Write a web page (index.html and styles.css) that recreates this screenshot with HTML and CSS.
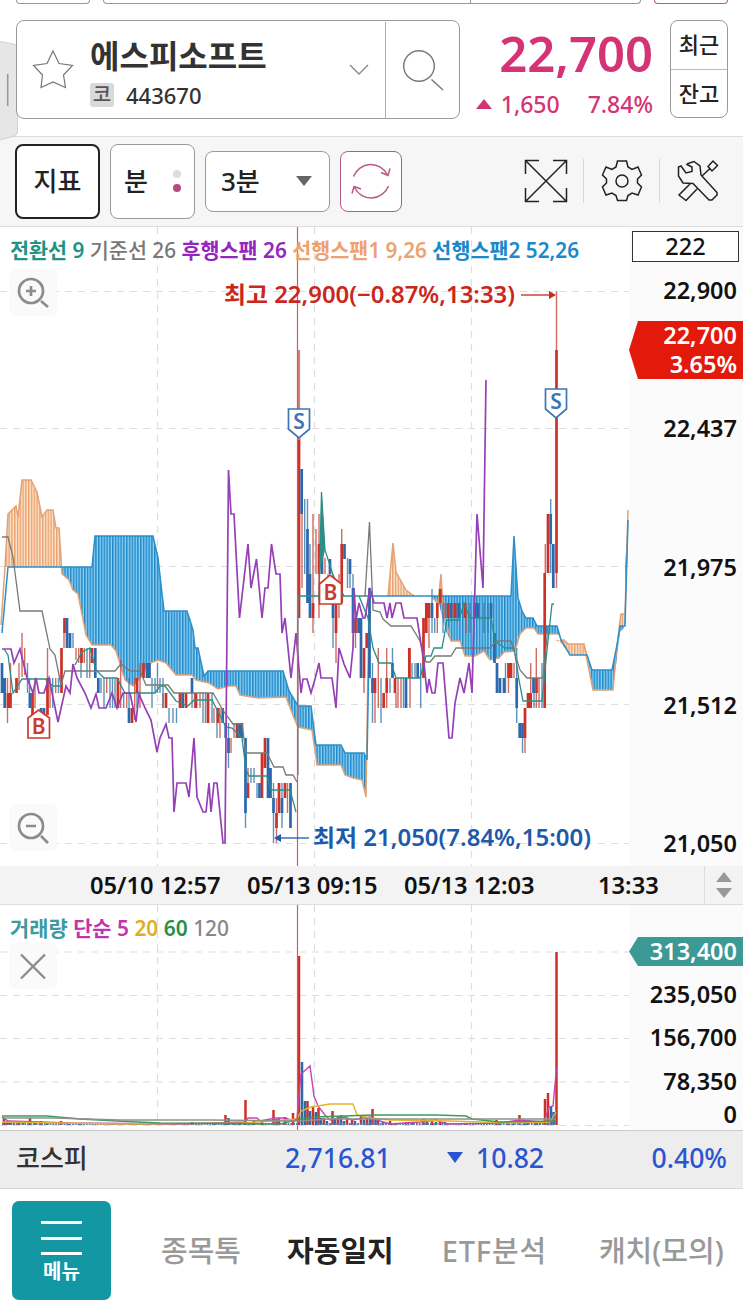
FILE: index.html
```html
<!DOCTYPE html>
<html lang="ko">
<head>
  <meta charset="UTF-8" />
  <meta name="viewport" content="width=device-width, initial-scale=1.0"/>
  <title>에스피소프트 차트</title>
  <link rel="stylesheet" href="styles.css">
</head>
<body>

  <!-- Previous row, scrolled away -->
  <div class="top-row">
    <span class="stub"></span>
    <span class="stub wide"><i></i></span>
    <span class="stub pink"></span>
  </div>

  <!-- Stock header -->
  <header class="stock">
    <svg class="handle" width="18" height="102" viewBox="0 0 18 102">
      <path d="M0 1.5L14 4Q17.5 5 17.5 9V91Q17.5 95 14 96L0 100" fill="#e6e6e6" stroke="#d0d0d0"/>
      <path d="M7.7 34V66" stroke="#999" stroke-width="1.6"/>
    </svg>
    <div class="stock-box">
      <svg class="star" width="42" height="42" viewBox="0 0 42 42">
        <path d="M21 2L27 14.5L40.5 16.5L31.5 26L33.5 38.5L21 33L9 38.5L10.5 26L1.5 16.5L15 14.5Z"/>
      </svg>
      <div class="stock-name">
        <h1>에스피소프트</h1>
        <div class="code"><span class="market">코</span><span>443670</span></div>
      </div>
      <svg class="chevron" width="20" height="12" viewBox="0 0 20 12"><path d="M1 1L10 10L19 1"/></svg>
      <div class="search">
        <svg width="42" height="42" viewBox="0 0 42 42"><circle cx="17" cy="17" r="15.3"/><path d="M29.5 30.5L41 41"/></svg>
      </div>
    </div>
    <div class="price">
      <strong>22,700</strong>
      <div class="change"><i class="up"></i><span>1,650</span><span class="rate">7.84%</span></div>
    </div>
    <div class="quick"><span>최근</span><span>잔고</span></div>
  </header>

  <!-- Chart toolbar -->
  <div class="toolbar">
    <div class="btn active">지표</div>
    <div class="btn minute">분<span class="dots"><i></i><i class="on"></i></span></div>
    <div class="btn select">3분<i class="caret"></i></div>
    <div class="btn refresh">
      <svg width="42" height="42" viewBox="0 0 42 42">
        <path d="M3.5 16.5A18.5 18.5 0 0 1 37.5 15M31 12.5L38 15.5L40 8.5M38.5 26A18.5 18.5 0 0 1 4.500 27.500M2 33.500L4 26.500L11 29"/>
      </svg>
    </div>
    <div class="tools">
      <svg width="44" height="44" viewBox="0 0 44 44">
        <path d="M1.500 15V1.500H15M29 1.500H42.500V15M42.500 29V42.500H29M15 42.500H1.500V29M1.500 1.500L42.500 42.500M42.500 1.500L1.500 42.500"/>
      </svg>
      <svg width="44" height="44" viewBox="0 0 44 44">
        <path d="M17.500 2H26.500L28 8L32 10.500L38 8L41.500 16L37.500 20V24L41.500 28L38 36L32 34L28 36.500L26.500 41.500H17.500L16 36.500L12 34L6 36L2.500 28L6.500 24V20L2.500 16L6 8L12 10.500L16 8Z"/>
        <circle cx="22" cy="22" r="6"/>
      </svg>
      <svg width="44" height="44" viewBox="0 0 44 44">
        <path d="M12 4.500L18 2.500L24 7L25 16L41 33.500V36L36 41H33L17 24.500L7 24L2.500 17V8L5 7L10 14L16 12.500V8L11 5.500ZM14 25L3 36L10 41.500L21 30M26 17L34.500 9M32 7.500L37 2L41.500 6.500L36 12Z"/>
      </svg>
    </div>
  </div>

  <!-- Price chart -->
  <section class="chart">
    <svg class="plot" width="629" height="639" viewBox="0 227 629 639">
      <defs>
        <pattern id="hatchBlue" width="2.8" height="10" patternUnits="userSpaceOnUse">
          <rect width="2.8" height="10" fill="#8fd2f5"/><rect width="1.5" height="10" fill="#2089c8"/>
        </pattern>
        <pattern id="hatchOrange" width="2.8" height="10" patternUnits="userSpaceOnUse">
          <rect width="2.8" height="10" fill="#ffe8d2"/><rect width="1.5" height="10" fill="#e8a270"/>
        </pattern>
      </defs>
      <path class="grid" d="M0 291.500H629M0 428.500H629M0 566.500H629M0 704.500H629M0 843.500H629M157.500 227V866M314.500 227V866M471.500 227V866"/>

      <!-- cloud -->
      <g fill="url(#hatchOrange)">
        <path d="M5 567L8 514L16 506L18 517L22 480H31L37 492L42 517L47 510H53L56 528H59L62 567Z"/>
        <path d="M388 596L393 543L396 572L401 581L406 590L414 596ZM438 596L441 574L443 596ZM554 640H564L568 644H584L588 655H570L560 642ZM618 628L621 614H624V625Z"/>
      </g>
      <g fill="url(#hatchBlue)">
        <path d="M62 567H92L95 536H153L158 558L164 611H187L193 630L195 648H198L204 676L208 671H283L289 691L298 706H311L316 745H341L345 753H364L366 760V797L362 780L353 778L345 775L341 765H317L312 730L298 727L294 718L286 697L258 698L240 695L236 686H229L218 689L209 683L196 680L192 675H176L166 663L158 660L148 664L142 676L133 686L125 680L116 651L111 645H92L86 635L78 594L73 590L69 580L62 574Z"/>
        <path d="M432 596H511L514 536L518 598L522 611L526 618H533L537 626H557L561 640L570 655H587L592 670H612L617 645L620 626H625V567L628 520V545L624 628L620 632L613 690H593L587 655H570L558 634H538L534 628H526L520 634L515 651L504 652L499 658L490 660L484 651L475 656H465L460 641H451L446 632L439 604Z"/>
      </g>
      <path class="spanA" d="M1 625L5 567L8 514L16 506L18 517L22 480H31L37 492L42 517L47 510H53L56 528H59L62 574L69 580L73 590L78 594L86 635L92 645H111L116 651L125 680L133 686L142 676L148 664L158 660L166 663L176 675H192L196 680L209 683L218 689L229 686H236L240 695L258 698L286 697L294 718L298 727L312 730L317 765H341L345 775L353 778L362 780L366 797L369 600M388 596L393 543L396 572L401 581L406 590L414 596M432 597L438 604L441 574L443 610L451 641H460L465 656H475L484 651L490 660L499 658L504 652L515 651L520 634L526 628H534L538 634H558M560 640H564L568 644H584L588 665L593 690H613L616 655L621 614H625L628 510"/>
      <path class="spanB" d="M2 633L8 567H92L95 536H153L158 558L164 611H187L193 630L195 648H198L204 676L208 671H283L289 691L298 706H311L316 745H341L345 753H364L367 760L370 596H511L514 536L518 598L522 611L526 618H533L537 626H557L561 640L570 655H587L592 670H612L617 645L620 626H625L628 520"/>

      <!-- candle wicks -->
      <path class="wick up" d="M7.500 678V723M10.500 663V693M19 663V690M22 633V677M24.700 648V675M35 678V708M47.500 648V708M50 678V708M55.700 678V693M64 633V648M76 648V660M78.700 648V663M84.300 648V663M89.700 648V678M106.700 678V693M117.500 678V708M120.700 660V708M126.700 693V708M134.700 678V720M140 663V708M163 693V708M194.500 693V708M200 693V708M214 708V723M220 708V738M231 738V753M234 723V738M276.500 798V843M248 768V798M287.500 783V813M302 514V588M313 514V633M316 529V574M319 514V618M325 558V574M328 574V590M336 603V663M339 574V618M341.700 529V603M355.500 618V648M364 648V693M375 678V723M378.300 648V708M386.700 648V708M396 693V708M398 678V708M401 678V708M410 648V708M429 603V648M437.300 603V633M445 603V618M453 603V618M466 603V633M508.500 663V693M514 663V678M525 708V753M530.700 663V708M536.300 648V708M539 678V708M545.300 544V573M556.500 291V350M556.500 573V588"/>
      <path class="wick down" d="M27.500 663V693M29.500 678V708M52.700 678V708M58.500 678V693M73 633V648M81 648V678M87 648V678M101 678V693M104 678V708M110 678V708M112.500 678V708M115 678V708M123.700 693V708M129 678V723M137 678V708M152 678V708M155 678V693M157.500 663V693M160 678V693M163 678V708M169 708V723M173 708V723M176.500 708V723M183 693V708M192 678V708M203 693V723M205.500 693V723M212 693V723M217 708V738M228.500 723V768M245.500 738V828M251 768V783M254 768V783M257 783V798M273.500 783V843M282 783V828M304.700 499V574M307.500 499V603M310 544V618M333 574V648M347.500 558V588M350 559V588M353 574V633M372.500 663V723M381 678V723M392.500 648V678M390 678V693M403.500 678V708M412 663V678M415 663V678M420.700 663V708M432 589V633M434.700 618V633M443 603V633M457 603V618M470 603V633M484 603V633M488 603V633M505.500 663V693M516.700 648V723M522.500 723V753M534 678V708M542 663V708M550.700 499V573"/>
      <!-- candle bodies -->
      <path class="body up" d="M8 693V708M10.500 693V708M16.500 678V693M32.500 693V715M47.500 678V715M61.500 648V693M64.500 618V633M81.500 648V663M92 648V663M118 678V708M132 708V723M137 678V693M143.500 663V678M166 693V708M180 693V708M186 693V708M196 693V708M208 693V723M218 708V723M237 723V738M248 783V798M262 753V798M265 738V768M276.500 813V828M279 783V813M285 783V798M299 438V618M313 603V618M319 544V574M336 603V633M341.700 544V603M355.500 618V633M364 648V678M366.700 633V648M375 678V693M383.700 693V708M386.700 678V693M395 678V693M409.300 648V678M423.500 618V678M426.300 603V633M429 603V618M437.300 603V618M440.300 589V603M448 603V618M455 603V618M465 603V618M508.500 663V678M511 663V678M525 708V738M528 693V708M530.700 693V708M536.500 678V693M544.700 573V708M548 514V573M556.500 350V573"/>
      <path class="body down" d="M2 663V693M4.700 678V708M30 693V708M41 708V712M44 708V716M67 618V648M70 633V648M95.300 648V678M98.300 678V693M129 708V723M147 663V678M149.500 663V678M182.700 693V708M192 678V693M222.700 708V723M225.700 723V738M228.500 738V753M239.500 723V738M242 723V738M245.500 738V813M259.500 783V798M268 738V798M270.500 768V798M273.500 798V813M282 798V813M290.500 783V828M301.700 469V514M307.500 529V603M310 574V618M322 529V574M330 559V574M333 603V618M344.500 544V559M350 559V574M353 588V633M358.500 618V633M361 618V678M369.500 588V678M372.500 678V693M392.500 663V678M406 678V708M417.700 663V678M432 603V618M451 603V618M459 603V618M475 603V618M478 603V618M491 603V618M494.500 633V663M497 663V693M500 678V693M504 678V693M516.700 678V708M519.700 723V738M522.500 723V738M533.500 678V693M550.700 514V544M553.300 544V588"/>
      <path d="M298.700 350V440" stroke="#cf8078" stroke-width="2.800"/>

      <!-- indicator lines -->
      <path class="line turn" d="M4 649L8 655L13 693L22 679H45L53 686H61M75 665L82 652L90 648L96 670L104 678H117L125 693H155L160 686H165L176 701L188 706L194 700H212L226 727L232 728L242 738L246 770L249 776H267L271 790L274 790H290L296 812M319 600L321.500 492L325 550L333 575L344 596M359 596L368 618L373 648L379 663H391L396 678H420L426 656H431L434 648H442L447 620H459L464 603L470 618H491L495 641L505 648H514L519 680L523 701H542L547 650L552 604H554"/>
      <path class="line base" d="M2 537H8L13 557L20 611H42L50 649L55 655L61 685L65 671H115L121 664L130 671H140L146 685H168L174 693H213L224 712L233 724H242L246 753H267L274 767H283L286 775H293L297 782M298 775V596M365 596L369.500 522L373 610L380 612L383 619L391 626H411L420 641L426 662H430L435 656H451L456 648H490L496 641H511L520 670L527 678H543L548 626"/>
      <path class="line turn" d="M298 596H370"/>
      <path class="fill-spike" d="M319 575L321.500 492L325 550Z"/>
      <path class="line lag" d="M2 649H11L14 663L20 649L27 678L33 693L36 678L39 693H44L49 678L58 722L66 686L70 693L73 664L77 678L85 693L91 708L96 694L99 708H106L112 693L117 708L123 693L130 693L136 722L139 694L145 708L151 720L157 752L160 738L166 724L169 738H172L174 812L177 783H186L189 797L194 738L197 797L203 812H206L209 783L211 812L214 783H217L223 843H225L228.500 470L231 514L234 514L239.500 618L248 544L251 588L256.500 559L262 618L265 588L268 588L271.500 544L276 574L280 574L282 633L285 618L291 678L296 633L301 693L303 679L307 679L311 693L315 679L319 663L321 678L332 678L336 708L339 648L344 664L350 678L353 648L354 588L356 620L359 603L363 618L365 618L370 588L374 603H384L387 618L390 603L392 618L396 603H401L404 618H417L424 663L427 693L429 679L432 693H435L438 663H443L449 738H452L455 703L460 678L464 693L469 663L472 693L477 514L483 588L486 380"/>

      <path class="cursor" d="M297.500 227V866"/>

      <!-- legend -->
      <text class="legend" x="10" y="258" textLength="569" lengthAdjust="spacingAndGlyphs"><tspan fill="#209384">전환선 9</tspan> <tspan class="light" fill="#777">기준선 26</tspan> <tspan fill="#9426bd">후행스팬 26</tspan> <tspan fill="#eda270">선행스팬1 9,26</tspan> <tspan fill="#1b88cc">선행스팬2 52,26</tspan></text>
      <text class="note" x="224" y="303" fill="#c9281c" textLength="291" lengthAdjust="spacingAndGlyphs">최고 22,900(−0.87%,13:33)</text>
      <path d="M521 295H550" stroke="#c9281c" stroke-width="1.300"/><path d="M549 291V299L556 295Z" fill="#c9281c"/>
      <text class="note" x="313" y="846" fill="#1c5aab" textLength="278" lengthAdjust="spacingAndGlyphs">최저 21,050(7.84%,15:00)</text>
      <path d="M280 838H309" stroke="#1c5aab" stroke-width="1.300"/><path d="M281 834V842L274 838Z" fill="#1c5aab"/>

      <!-- trade marks -->
      <g class="mark sell"><path d="M288.500 409H309.500V429L299 438L288.500 429Z"/><text x="299" y="428.500">S</text></g>
      <g class="mark sell"><path d="M545.500 389H566.500V409L556 418L545.500 409Z"/><text x="556" y="408.500">S</text></g>
      <g class="mark buy"><path d="M319.500 604V584L330 575L341.500 584V604Z"/><text x="330.500" y="600">B</text></g>
      <g class="mark buy"><path d="M28 738V718L38.500 710L49.500 718V738Z"/><text x="38.700" y="734">B</text></g>

      <!-- zoom buttons -->
      <g class="zoom"><rect x="9" y="269" width="48" height="47" rx="6"/><circle cx="31" cy="291" r="12"/><path d="M41 301L48 307M26 291H36M31 286V296"/></g>
      <g class="zoom"><rect x="9" y="804" width="48" height="47" rx="6"/><circle cx="31" cy="826" r="12"/><path d="M41 836L48 843M26 826H36"/></g>
    </svg>
    <div class="axis">
      <span class="count">222</span>
      <span>22,900</span><span>22,437</span><span>21,975</span><span>21,512</span><span>21,050</span>
      <div class="now">22,700<br>3.65%</div>
    </div>
  </section>

  <!-- Time axis -->
  <div class="times">
    <span>05/10 12:57</span><span>05/13 09:15</span><span>05/13 12:03</span><span class="last">13:33</span>
    <div class="sort"><i class="tri-up"></i><i class="tri-down"></i></div>
  </div>

  <!-- Volume chart -->
  <section class="volume">
    <svg class="plot" width="629" height="225" viewBox="0 905 629 225">
      <path class="grid" d="M0 952H629M0 995.500H629M0 1038.500H629M0 1082H629M0 1125.500H629M157.500 905V1125M314.500 905V1125M471.500 905V1125"/>
      <path class="tiny up" d="M4 1118V1125M10 1121V1125M19 1121V1125M30 1118V1125M41 1121V1125M61 1121V1125M112 1123V1125M140 1123V1125M225.500 1115V1125M245.500 1100V1125M240 1122V1125M254 1121V1125M262 1121V1125M273.500 1110V1125M279 1118V1125M285 1117V1125M293 1113V1125M299 956V1125M307.500 1101V1125M313 1106V1125M318.500 1108V1125M324 1118V1125M332.500 1111V1125M338 1117V1125M347 1119V1125M352 1120V1125M361 1115V1125M367 1117V1125M372.500 1109V1125M378 1119V1125M390 1121V1125M406 1122V1125M423.500 1119V1125M432 1121V1125M440 1121V1125M466 1123V1125M496.500 1120V1125M508 1122V1125M519.500 1115V1125M528 1121V1125M536 1121V1125M545 1099V1125M548 1093V1125M556.500 952V1125"/>
      <path class="tiny down" d="M7 1121V1125M14 1122V1125M23 1122V1125M35 1122V1125M47 1122V1125M68 1123V1125M80 1123V1125M150 1123V1125M192 1122V1125M215 1122V1125M228.500 1118V1125M234 1122V1125M249 1122V1125M276.500 1119V1125M302 1062V1125M305 1101V1125M310 1111V1125M316 1112V1125M321 1118V1125M327 1121V1125M335 1118V1125M341 1115V1125M344 1121V1125M355 1121V1125M364 1120V1125M370 1118V1125M375.500 1119V1125M383 1122V1125M395 1123V1125M412 1123V1125M427 1121V1125M436 1122V1125M445 1122V1125M500 1122V1125M514 1122V1125M525 1122V1125M540 1122V1125M551 1106V1125M553.700 1112V1125"/>
      <path class="dots-row" d="M2 1124H298M318 1124H556"/>
      <path class="ma" stroke="#c545b4" d="M2 1117L8 1121L40 1122L70 1123L180 1124L245 1122L248 1118H257L260 1121L276 1118H286L292 1121L297 1118L301 1074L310 1066L314 1096L318 1106L325 1115L330 1120L345 1117L352 1120L370 1117L380 1121L390 1124L420 1122L436 1120L447 1124L500 1123L520 1120L531 1121L544 1122L549 1107L553 1106L556.500 1068"/>
      <path class="ma" stroke="#e3b32c" d="M2 1122L60 1123L120 1124L245 1123L297 1119L301 1111L311 1107L330 1104H353L357 1115L370 1118L390 1120L450 1121L510 1123L550 1122L556 1112"/>
      <path class="ma" stroke="#3f9b5d" d="M2 1116H47L80 1119L117 1121L160 1123L280 1124L300 1119L315 1117L372 1115H436L466 1116L472 1119L500 1122L556 1121"/>
      <path class="ma" stroke="#8d928b" d="M2 1118H54L120 1120H210L298 1121L330 1119H556"/>
      <path class="cursor" d="M297.500 905V1130"/>
      <text class="legend" x="10" y="936" textLength="219" lengthAdjust="spacingAndGlyphs"><tspan fill="#3c9aa0">거래량</tspan> <tspan fill="#bf35ad">단순 5</tspan> <tspan fill="#e0ae25">20</tspan> <tspan fill="#269046">60</tspan> <tspan class="light" fill="#888">120</tspan></text>
      <g class="zoom"><rect x="9" y="943" width="48" height="46" rx="6"/><path class="close" d="M21 954.500L45 978.500M45 954.500L21 978.500"/></g>
    </svg>
    <div class="axis">
      <div class="vol-now">313,400</div>
      <span>235,050</span><span>156,700</span><span>78,350</span><span class="zero">0</span>
    </div>
  </section>

  <!-- Index ticker -->
  <div class="index">
    <span class="name">코스피</span>
    <span class="value">2,716.81</span>
    <span class="diff"><i></i>10.82</span>
    <span class="pct">0.40%</span>
  </div>

  <!-- Bottom menu -->
  <nav class="menu">
    <a class="menu-btn"><i></i><i></i><i></i><b>메뉴</b></a>
    <a class="tab">종목톡</a>
    <a class="tab active">자동일지</a>
    <a class="tab etf">ETF분석</a>
    <a class="tab">캐치(모의)</a>
  </nav>

</body>
</html>
```
FILE: styles.css
```css
* {
  box-sizing: border-box;
}
body {
  margin: 0;
  width: 743px;
  height: 1312px;
  overflow: hidden;
  background: #fff;
  color: #222;
  font-family: "Noto Sans", "Noto Sans CJK KR", sans-serif;
  font-weight: 500;
}
svg {
  display: block;
  flex: none;
  fill: none;
}
.top-row {
  display: flex;
  justify-content: space-between;
  height: 20px;
  padding: 0 15px 0 16px;
}
.stub {
  width: 74px;
  height: 4px;
  border: 1.5px solid #999;
  border-top: none;
  border-radius: 0 0 7px 7px;
}
.stub.wide {
  width: 538px;
  padding-left: 366px;
}
.stub.wide i {
  display: block;
  width: 1px;
  height: 3px;
  background: #999;
}
.stub.pink {
  border-color: #b55b88;
}

/* stock header */
.stock {
  display: flex;
  position: relative;
  height: 116px;
  padding-left: 16px;
}
.handle {
  position: absolute;
  left: 0;
  top: 20px;
}
.stock-box {
  position: relative;
  display: flex;
  align-items: center;
  width: 444px;
  height: 99px;
  padding-left: 15px;
  background: #fff;
  border: 1.5px solid #999;
  border-radius: 8px;
}
.star {
  stroke: #777;
  stroke-width: 1.2;
}
.stock-name {
  flex: none;
  width: 275px;
  padding: 8px 0 0 16px;
}
h1 {
  margin: 0;
  font-size: 32px;
  line-height: 42px;
  font-weight: 700;
  color: #333;
}
.code {
  display: flex;
  align-items: center;
  gap: 12px;
  height: 36px;
  font-size: 22px;
  line-height: 34px;
  color: #333;
}
.market {
  width: 24px;
  height: 24px;
  border-radius: 3px;
  background: #d9d9d9;
  color: #555;
  font-size: 20px;
  line-height: 23px;
  text-align: center;
}
.chevron {
  stroke: #888;
  stroke-width: 1.4;
}
.search {
  display: flex;
  flex: none;
  align-items: center;
  justify-content: center;
  width: 74px;
  height: 96px;
  margin-left: auto;
  border-left: 1.5px solid #aaa;
  stroke: #777;
  stroke-width: 1.4;
}
.price {
  width: 193px;
  text-align: right;
  color: #d43475;
}
.price strong {
  display: block;
  font-size: 49px;
  line-height: 66px;
  font-weight: 600;
}
.change {
  display: flex;
  justify-content: flex-end;
  align-items: center;
  font-size: 23px;
  line-height: 36px;
}
.up {
  margin-right: 9px;
}
.change .up {
  border: 8px solid transparent;
  border-top: none;
  border-bottom: 10px solid #d43475;
}
.rate {
  margin-left: 28px;
}
.quick {
  display: flex;
  flex-direction: column;
  width: 58px;
  height: 98px;
  margin-left: 17px;
  border: 1.5px solid #999;
  border-radius: 8px;
}
.quick span {
  flex: 1;
  font-size: 22px;
  line-height: 47px;
  text-align: center;
}
.quick span + span {
  border-top: 1px solid #bbb;
}

/* toolbar */
.toolbar {
  display: flex;
  align-items: center;
  gap: 10px;
  height: 91px;
  padding: 0 23px 1px 15px;
  background: #f6f6f6;
  border-top: 1px solid #ddd;
  border-bottom: 1px solid #ddd;
}
.btn {
  display: flex;
  align-items: center;
  justify-content: center;
  width: 85px;
  height: 75px;
  border: 1.5px solid #999;
  border-radius: 8px;
  background: #fff;
  font-size: 26px;
  line-height: 36px;
}
.btn.active {
  border: 2px solid #222;
}
.minute {
  gap: 25px;
}
.dots i {
  display: block;
  width: 8px;
  height: 8px;
  margin: 6px 0;
  border-radius: 50%;
  background: #ddd;
}
.dots .on {
  background: #b54c7e;
}
.select {
  width: 125px;
  height: 61px;
  justify-content: space-between;
  padding: 0 17px 0 15px;
}
.caret {
  border: 8px solid transparent;
  border-top: 10px solid #666;
  border-bottom: none;
}
.refresh {
  width: 62px;
  height: 61px;
  border-color: #b55b88;
  stroke: #b55b88;
  stroke-width: 1.5;
}
.tools {
  display: flex;
  margin-left: auto;
  stroke: #222;
  stroke-width: 1.5;
}
.tools svg + svg {
  box-sizing: content-box;
  margin-left: 15px;
  padding-left: 16px;
  border-left: 1px solid #d8d8d8;
}

/* charts */
.chart,
.volume {
  display: flex;
}
.axis {
  position: relative;
  width: 114px;
  padding-right: 6px;
  background: #fbfbfb;
  color: #111;
  font-size: 23.5px;
  font-weight: 600;
  text-align: right;
}
.axis span {
  display: block;
}
.chart .axis {
  height: 639px;
  display: flex;
  flex-direction: column;
  justify-content: space-between;
  padding-top: 4px;
  padding-bottom: 5px;
}
.chart .axis span {
  line-height: 36px;
}
.chart .axis .count {
  width: 107px;
  height: 31px;
  margin: 0 -4px -92px 3px;
  border: 1.5px solid #333;
  background: #fff;
  font-weight: 500;
  line-height: 29px;
  text-align: center;
}
.now {
  position: absolute;
  top: 94px;
  right: 0;
  width: 114px;
  height: 58px;
  padding-right: 6px;
  background: #e3190b;
  clip-path: polygon(0 50%, 9px 0, 100% 0, 100% 100%, 9px 100%);
  color: #fff;
  line-height: 29px;
}
.grid {
  stroke: #dedede;
  stroke-width: 1.2;
  stroke-dasharray: 7 6;
}
.spanA,
.spanB {
  stroke: #e3a276;
  stroke-width: 1.5;
}
.spanB {
  stroke: #2b8fca;
}
.wick {
  stroke-width: 1.4;
  opacity: .8;
}
.wick.up {
  stroke: #c4473b;
}
.wick.down {
  stroke: #3577a8;
}
.body {
  stroke-width: 2.7;
}
.body.up {
  stroke: #cd3026;
}
.body.down {
  stroke: #2b68ae;
}
.line {
  stroke-width: 1.3;
}
.turn {
  stroke: #2b8f86;
}
.fill-spike {
  fill: #2b8f86;
}
.base {
  stroke: #757b78;
}
.lag {
  stroke: #9540b7;
  stroke-width: 1.7;
}
.cursor {
  stroke: #c9605b;
  stroke-width: 1.2;
}
.legend {
  font-size: 21px;
  font-weight: 600;
}
.light {
  font-weight: 500;
}
.note {
  font-size: 23px;
  font-weight: 600;
}
.mark path {
  fill: #fff;
  stroke-width: 1.7;
}
.mark text {
  font-size: 21px;
  font-weight: 600;
  text-anchor: middle;
}
.sell {
  stroke: #3e75b3;
}
.buy {
  stroke: #cc3b2e;
}
.mark text {
  stroke: none;
}
.sell text {
  fill: #3e75b3;
}
.buy text {
  fill: #cc3b2e;
}
.zoom {
  stroke: #8c8c8c;
  stroke-width: 2.7;
}
.zoom rect {
  fill: #f9f9f9;
  fill-opacity: .9;
  stroke: none;
}
.zoom .close {
  stroke-width: 2.4;
}

/* time axis */
.times {
  display: flex;
  align-items: center;
  height: 39px;
  padding-left: 90px;
  background: #f3f3f3;
  border-bottom: 1px solid #ddd;
  color: #111;
  font-size: 23.7px;
  font-weight: 600;
  line-height: 38px;
  white-space: nowrap;
}
.times span {
  width: 157px;
}
.times .last {
  width: 106px;
  margin-left: 37px;
}
.sort {
  display: flex;
  flex-direction: column;
  align-items: center;
  justify-content: center;
  gap: 6px;
  width: 39px;
  height: 38px;
  border-left: 1px solid #ddd;
}
.tri-up,
.tri-down {
  border: 8px solid transparent;
}
.tri-up {
  border-top: none;
  border-bottom: 10px solid #999;
}
.tri-down {
  border-bottom: none;
  border-top: 10px solid #999;
}

/* volume */
.volume .axis {
  height: 225px;
  padding-top: 32px;
}
.volume .axis span {
  line-height: 43.3px;
}
.volume .axis .zero {
  line-height: 23px;
}
.vol-now {
  height: 29px;
  margin: 0 -6px 7px 0;
  padding-right: 6px;
  background: #3b9996;
  clip-path: polygon(0 50%, 9px 0, 100% 0, 100% 100%, 9px 100%);
  color: #fff;
  line-height: 29px;
}
.tiny {
  stroke-width: 2.5;
}
.tiny.up {
  stroke: #cd3026;
}
.tiny.down {
  stroke: #2b68ae;
}
.dots-row {
  stroke: #5878a8;
  stroke-width: 2;
  stroke-dasharray: 1.8 1;
}
.ma {
  stroke-width: 1.4;
}

/* index ticker */
.index {
  display: grid;
  grid-template-columns: 269px 162px 140px 1fr;
  align-items: center;
  height: 59px;
  padding: 0 16px 4px;
  background: #ededed;
  border-top: 1px solid #ccc;
  border-bottom: 1px solid #d8d8d8;
  color: #2b55d0;
  font-size: 26.6px;
  line-height: 40px;
}
.index .name {
  color: #333;
  font-size: 26px;
}
.diff {
  display: flex;
  align-items: center;
}
.diff i {
  margin-right: 13px;
  border: 8px solid transparent;
  border-top: 11px solid #2b55d0;
  border-bottom: none;
}
.pct {
  text-align: right;
}

/* bottom menu */
.menu {
  display: flex;
  height: 123px;
  padding: 12px 0 0 12px;
}
.menu-btn {
  display: flex;
  flex: none;
  flex-direction: column;
  align-items: center;
  width: 99px;
  height: 99px;
  margin-right: 50px;
  padding-top: 20px;
  border-radius: 7px;
  background: #1397a3;
  color: #fff;
}
.menu-btn i {
  width: 41px;
  height: 3px;
  margin-bottom: 12.5px;
  background: #fff;
}
.menu-btn b {
  margin-top: -8px;
  font-size: 20px;
  line-height: 24px;
}
.tab {
  margin-right: 46px;
  color: #999;
  font-size: 29px;
  line-height: 100px;
  white-space: nowrap;
}
.tab.active {
  margin-right: 48px;
  color: #222;
  font-weight: 700;
}
.tab.etf {
  margin-right: 52px;
  letter-spacing: .8px;
}
```
